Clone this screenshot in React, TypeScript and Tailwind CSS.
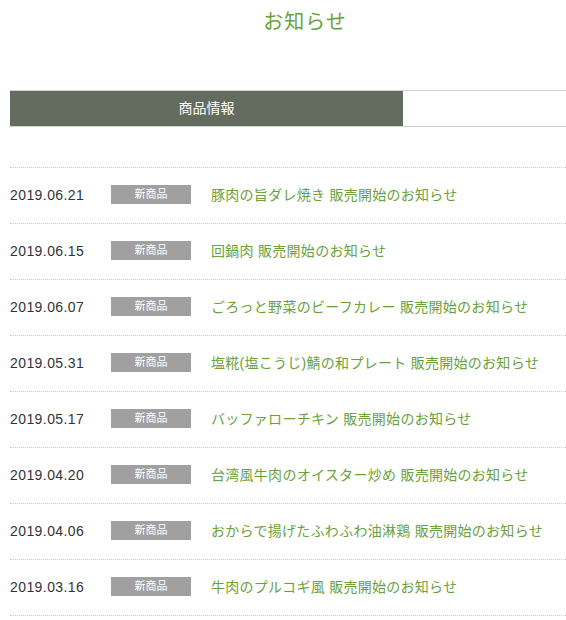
const news = [
  { date: '2019.06.21', title: '豚肉の旨ダレ焼き 販売開始のお知らせ' },
  { date: '2019.06.15', title: '回鍋肉 販売開始のお知らせ' },
  { date: '2019.06.07', title: 'ごろっと野菜のビーフカレー 販売開始のお知らせ' },
  { date: '2019.05.31', title: '塩糀(塩こうじ)鯖の和プレート 販売開始のお知らせ' },
  { date: '2019.05.17', title: 'バッファローチキン 販売開始のお知らせ' },
  { date: '2019.04.20', title: '台湾風牛肉のオイスター炒め 販売開始のお知らせ' },
  { date: '2019.04.06', title: 'おからで揚げたふわふわ油淋鶏 販売開始のお知らせ' },
  { date: '2019.03.16', title: '牛肉のプルコギ風 販売開始のお知らせ' },
];

function NewsRow({ date, title }: { date: string; title: string }) {
  return (
    <li className="flex items-center h-[56px] border-b border-dotted border-[#cccccc]">
      <span className="w-[101px] shrink-0 text-[14px] tracking-[0.03em] text-[#333333]">{date}</span>
      <span className="w-[80px] h-[19px] shrink-0 mr-[20px] mb-[2px] bg-[#a0a0a0] text-white text-[11px] leading-[18px] text-center">
        新商品
      </span>
      <a href="#" className="text-[14px] tracking-[0.02em] text-[#6aa23a] whitespace-nowrap">
        {title}
      </a>
    </li>
  );
}

export default function App() {
  return (
    <div
      className="w-[566px] h-[620px] overflow-hidden bg-white"
      style={{ fontFamily: '"Liberation Sans", "Noto Sans CJK JP", sans-serif' }}
    >
      <div className="w-[590px] ml-[10px]">
        <h1 className="pt-[8px] text-center text-[20px] leading-[28px] tracking-[0.05em] text-[#6aa23a]">
          お知らせ
        </h1>

        <div className="mt-[54px] flex border-y border-[#d0d0d0]">
          <div className="w-[393px] h-[35px] flex items-center justify-center bg-[#646b5f] text-white text-[14px]">
            商品情報
          </div>
        </div>

        <ul className="mt-[40px] border-t border-dotted border-[#cccccc]">
          {news.map((n) => (
            <NewsRow key={n.date} date={n.date} title={n.title} />
          ))}
        </ul>
      </div>
    </div>
  );
}
